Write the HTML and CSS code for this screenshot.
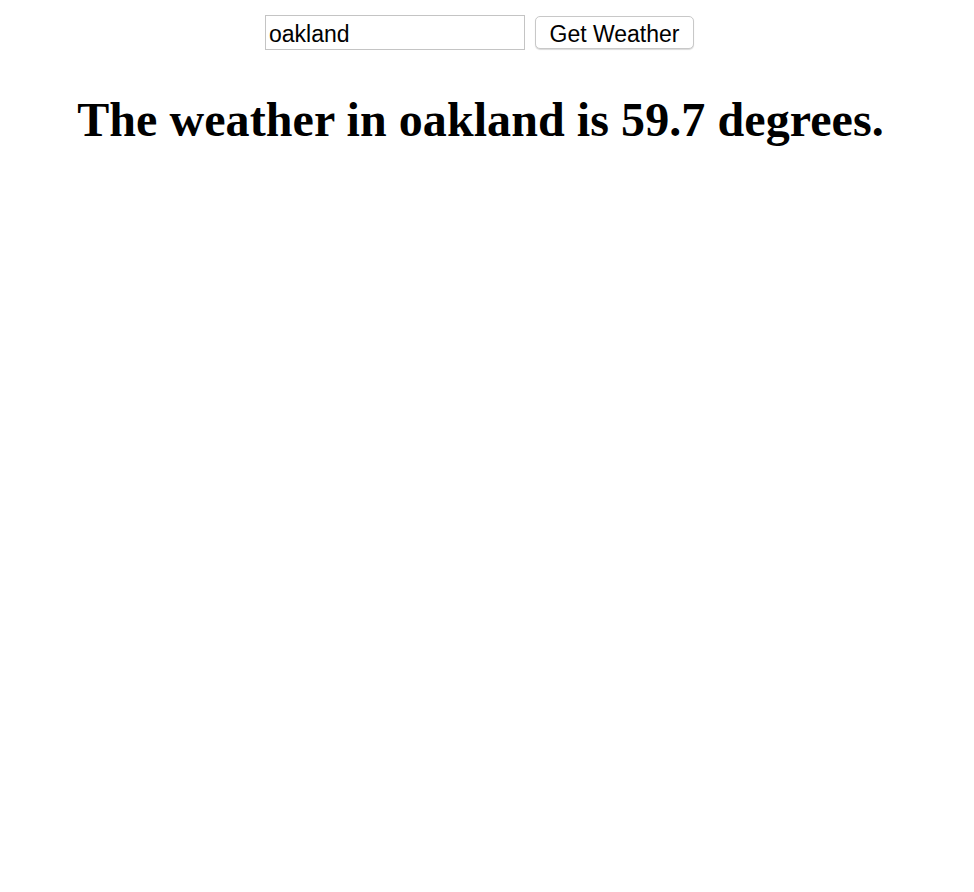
FILE: index.html
```html
<!DOCTYPE html>
<html>
<head>
<meta charset="utf-8">
<link rel="stylesheet" href="styles.css">
</head>
<body>
<div class="app">
  <form class="search">
    <input class="city" type="text" value="oakland">
    <button class="go" type="button">Get Weather</button>
  </form>
  <h1 class="result">The weather in oakland is 59.7 degrees.</h1>
</div>
</body>
</html>
```
FILE: styles.css
```css
html, body {
  margin: 0;
  padding: 0;
  background: #fff;
}
.app {
  width: 961px;
  display: flex;
  flex-direction: column;
  align-items: center;
  font-family: "Liberation Serif", serif;
}
.search {
  display: flex;
  gap: 10px;
  margin-top: 15px;
  margin-right: 2px;
  align-items: center;
}
.city {
  box-sizing: border-box;
  width: 260px;
  height: 35px;
  border: 1px solid #c4c4c4;
  padding: 4px 3px 0;
  margin: 0;
  font-family: "Liberation Sans", Arial, sans-serif;
  font-size: 23px;
  color: #000;
  outline: none;
}
.go {
  box-sizing: border-box;
  width: 159px;
  height: 33px;
  margin: 0;
  border: 1px solid #c8c8c8;
  border-radius: 5px;
  background: #fff;
  box-shadow: 0 1px 1px rgba(0,0,0,0.15);
  font-family: "Liberation Sans", Arial, sans-serif;
  font-size: 23px;
  color: #000;
  padding: 4px 0 0;
  line-height: 1;
}
.result {
  margin: 42px 0 0;
  font-size: 48px;
  font-weight: bold;
  line-height: 1.15;
  letter-spacing: 0.08px;
  text-align: center;
}
```
